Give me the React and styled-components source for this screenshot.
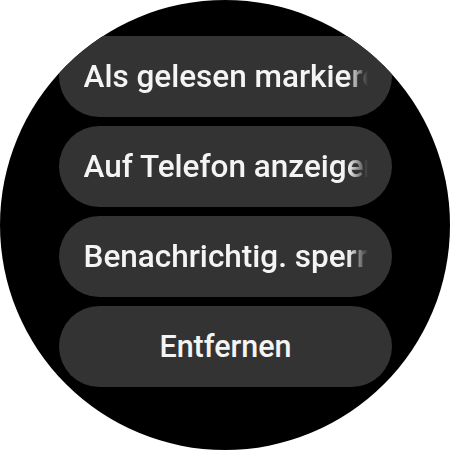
import React from "react";
import styled, { createGlobalStyle, css } from "styled-components";

const GlobalStyle = createGlobalStyle`
  html, body {
    margin: 0;
    padding: 0;
    background: #ffffff;
  }
`;

const Watch = styled.div`
  width: 450px;
  height: 450px;
  border-radius: 50%;
  background: #000000;
  overflow: hidden;
  display: flex;
  flex-direction: column;
  align-items: center;
  gap: 9px;
  padding-top: 36px;
  box-sizing: border-box;
  font-family: Roboto, "Noto Sans", sans-serif;
`;

const Chip = styled.div`
  flex: none;
  width: 333px;
  height: 81px;
  border-radius: 40.5px;
  background: #333333;
  display: flex;
  align-items: center;
  padding: 0 24px 0 25px;
  box-sizing: border-box;
`;

const Label = styled.span`
  display: block;
  width: 100%;
  color: #f4f4f4;
  font-size: 31.5px;
  font-weight: 500;
  line-height: 38px;
  white-space: nowrap;
  overflow: hidden;
  ${(props) =>
    props.centered
      ? css`
          text-align: center;
          font-size: 30.5px;
        `
      : css`
          -webkit-mask-image: linear-gradient(to right, #000 calc(100% - 20px), transparent);
          mask-image: linear-gradient(to right, #000 calc(100% - 20px), transparent);
        `}
`;

const actions = [
  { label: "Als gelesen markieren" },
  { label: "Auf Telefon anzeigen" },
  { label: "Benachrichtig. sperren" },
  { label: "Entfernen", centered: true },
];

export default function App() {
  return (
    <>
      <GlobalStyle />
      <Watch>
        {actions.map((action) => (
          <Chip key={action.label}>
            <Label centered={action.centered}>{action.label}</Label>
          </Chip>
        ))}
      </Watch>
    </>
  );
}
